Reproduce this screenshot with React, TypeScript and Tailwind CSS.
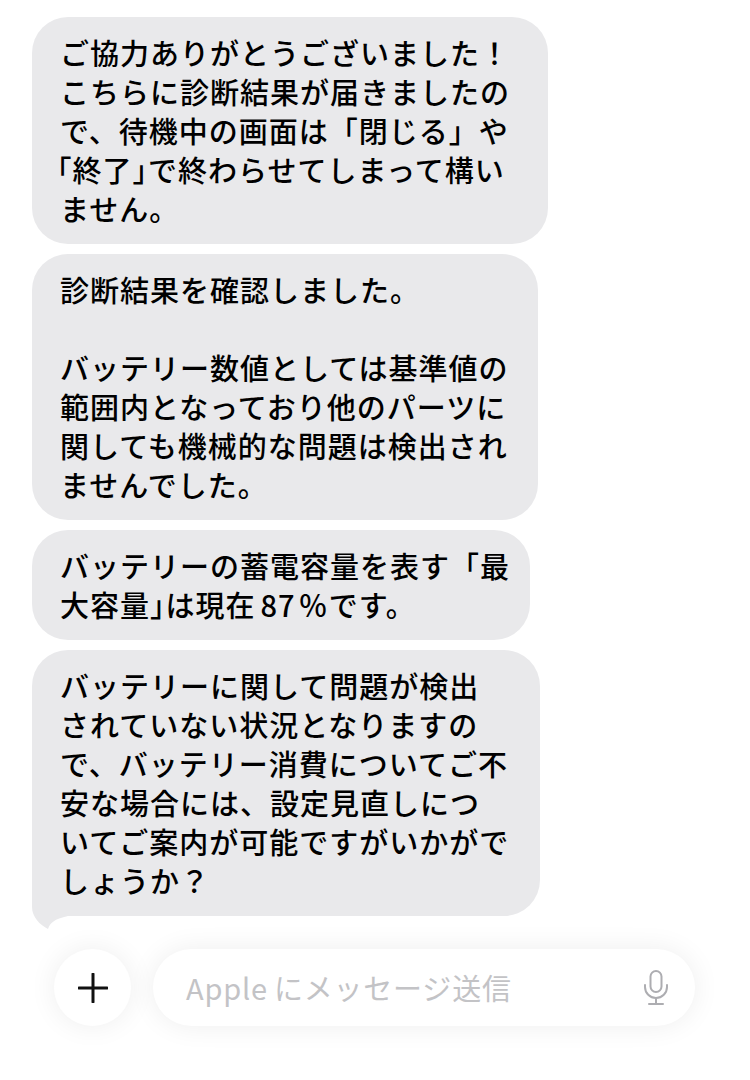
import type { ReactNode } from 'react'

const font = '[font-family:"Noto_Sans_CJK_JP","Noto_Sans",sans-serif]'
const halt = '[font-feature-settings:"halt"]'

function Bubble({ width, children, tail }: { width: string; children: ReactNode; tail?: boolean }) {
  return (
    <div className={`relative ${width} rounded-[36px] bg-[#e9e9eb] pl-[28px] py-[16px]`}>
      {tail && (
        <svg
          className="absolute left-0 bottom-[-13px]"
          width="50"
          height="50"
          viewBox="0 0 50 50"
        >
          <path d="M0 0 V28 C0 38 8 46 16 50 C18 44 22 40 36 37 H50 V0 Z" fill="#e9e9eb" />
        </svg>
      )}
      <div className="relative whitespace-nowrap text-[29px] font-medium leading-[39px] tracking-[1px] text-black">
        {children}
      </div>
    </div>
  )
}

export default function App() {
  return (
    <div className={`h-[1080px] w-[750px] overflow-hidden bg-white ${font}`}>
      {/* Messages */}
      <div className="flex flex-col gap-[10px] px-[32px] pt-[17px]">
        <Bubble width="w-[516px]">
          ご協力ありがとうございました！
          <br />
          こちらに診断結果が届きましたの
          <br />
          で、待機中の画面は「閉じる」や
          <br />
          <span className={`${halt} ml-[-3px]`}>「</span>終了<span className={halt}>」</span>
          で終わらせてしまって構い
          <br />
          ません。
        </Bubble>

        <Bubble width="w-[506px]">
          診断結果を確認しました。
          <br />
          <br />
          バッテリー数値としては基準値の
          <br />
          範囲内となっており他のパーツに
          <br />
          関しても機械的な問題は検出され
          <br />
          ませんでした。
        </Bubble>

        <Bubble width="w-[498px]">
          バッテリーの蓄電容量を表す「最
          <br />
          大容量<span className={halt}>」</span>は現在<span className="ml-[5px]">87</span>
          <span className="ml-[3px]">％</span>です。
        </Bubble>

        <Bubble width="w-[508px]" tail>
          バッテリーに関して問題が検出
          <br />
          されていない状況となりますの
          <br />
          で、バッテリー消費についてご不
          <br />
          安な場合には、設定見直しにつ
          <br />
          いてご案内が可能ですがいかがで
          <br />
          しょうか？
        </Bubble>
      </div>

      {/* Input bar */}
      <div className="mt-[33px] flex items-center gap-[22px] pl-[54px] pr-[55px]">
        <button className="flex h-[77px] w-[77px] shrink-0 items-center justify-center rounded-full bg-white shadow-[0_0_28px_rgba(0,0,0,0.07)]">
          <svg width="30" height="30" viewBox="0 0 30 30">
            <path d="M15 1 V29 M1 15 H29" stroke="#111" strokeWidth="3" strokeLinecap="round" />
          </svg>
        </button>
        <div className="flex h-[77px] flex-1 items-center justify-between rounded-full bg-white pl-[33px] pr-[26px] shadow-[0_0_28px_rgba(0,0,0,0.07)]">
          <span className="text-[29px] tracking-[0.8px] text-[#c3c3c6]">
            Apple<span className="ml-[6px]">にメッセージ送信</span>
          </span>
          <svg width="26" height="36" viewBox="0 0 26 36" fill="none" stroke="#adadb1" strokeWidth="2" strokeLinecap="round">
            <rect x="7.5" y="1" width="11" height="21" rx="5.5" />
            <path d="M2 15 V17 A11 11 0 0 0 24 17 V15" />
            <path d="M13 28 V34 M6 34 H20" />
          </svg>
        </div>
      </div>
    </div>
  )
}
